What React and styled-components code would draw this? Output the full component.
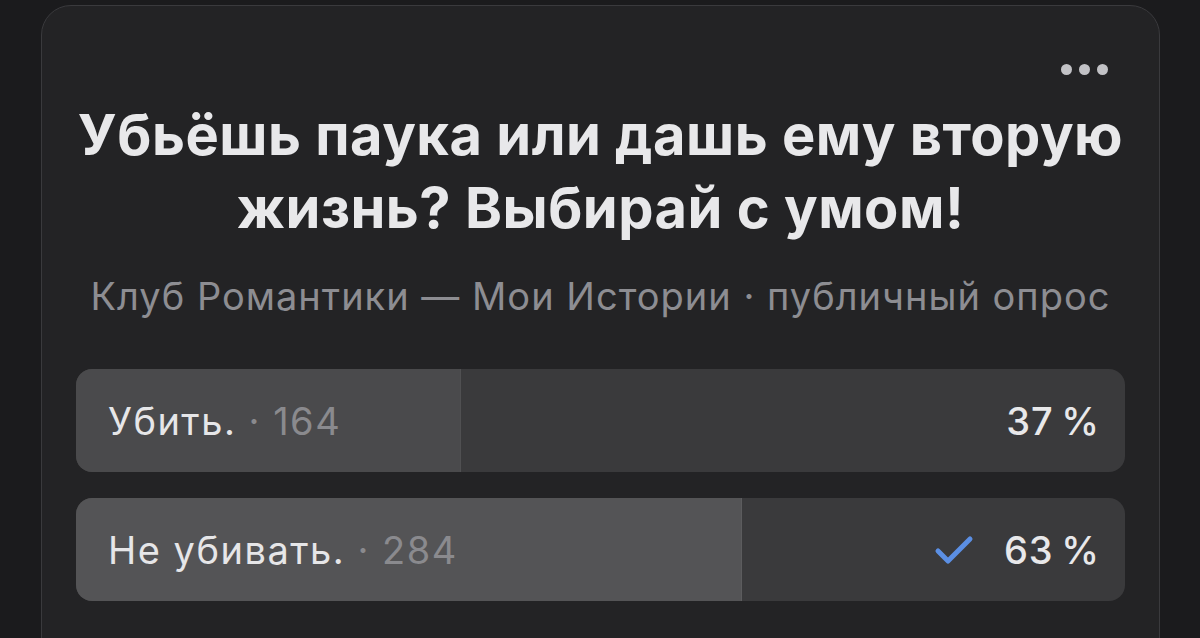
import React from 'react';
import styled, { createGlobalStyle } from 'styled-components';

const GlobalStyle = createGlobalStyle`
    html, body {
        margin: 0;
        padding: 0;
        background: #1b1b1d;
        height: 100%;
        overflow: hidden;
    }
    body {
        font-family: Inter, "Noto Sans", "Liberation Sans", sans-serif;
        -webkit-font-smoothing: antialiased;
    }
`

const options = [
    { label: 'Убить.', votes: 164, percent: 37 },
    { label: 'Не убивать.', votes: 284, percent: 63, chosen: true },
];

const total = options.reduce((sum, o) => sum + o.votes, 0);

function Check() {
    return (
        <svg width="40" height="32" viewBox="0 0 40 32" fill="none">
            <path d="M4 17 L14 27 L36 5" stroke="#5b8fe4" strokeWidth="5"
                strokeLinecap="round" strokeLinejoin="round" />
        </svg>
    )
}

function PollOption({ label, votes, percent, chosen }) {
    return (
        <Option>
            <Fill chosen={chosen} style={{ width: `${votes / total * 100}%` }} />
            <OptionText>
                {label}<Votes> · {votes}</Votes>
            </OptionText>
            <Result>
                {chosen && <Check />}
                <Percent>{percent}&#8201;%</Percent>
            </Result>
        </Option>
    )
}

export default function App() {
    return (
        <>
            <GlobalStyle />
            <Page>
                <Card>
                    <MoreButton>
                        <Dot /><Dot /><Dot />
                    </MoreButton>
                    <Title>Убьёшь паука или дашь ему вторую жизнь? Выбирай с умом!</Title>
                    <Meta>Клуб Романтики — Мои Истории · публичный опрос</Meta>
                    <Options>
                        {options.map(o => <PollOption key={o.label} {...o} />)}
                    </Options>
                </Card>
            </Page>
        </>
    )
}

const Page = styled.div`
    width: 1200px;
    height: 638px;
    padding: 5px 40px 0 41px;
    box-sizing: border-box;
    overflow: hidden;
`

const Card = styled.div`
    position: relative;
    height: 700px;
    box-sizing: border-box;
    background: #232325;
    border: 1px solid #3a3a3d;
    border-radius: 30px;
    padding: 93px 34px 0 34px;
`

const MoreButton = styled.div`
    position: absolute;
    top: 58px;
    right: 51px;
    display: flex;
    gap: 7px;
`

const Dot = styled.span`
    width: 11px;
    height: 11px;
    border-radius: 50%;
    background: #c2c2c6;
`

const Title = styled.h1`
    margin: 0 auto;
    max-width: 1080px;
    text-align: center;
    font-size: 56px;
    line-height: 73px;
    font-weight: 700;
    letter-spacing: 0.5px;
    color: #e8e8ea;
`

const Meta = styled.div`
    margin-top: 29px;
    text-align: center;
    font-size: 38px;
    line-height: 44px;
    letter-spacing: 1px;
    color: #8d8d92;
`

const Options = styled.div`
    margin-top: 51px;
    display: flex;
    flex-direction: column;
    gap: 26px;
`

const Option = styled.div`
    position: relative;
    height: 103px;
    border-radius: 16px;
    background: #3a3a3c;
    overflow: hidden;
    display: flex;
    align-items: center;
    justify-content: space-between;
    padding: 0 25px 0 32px;
`

const Fill = styled.div`
    position: absolute;
    left: 0;
    top: 0;
    bottom: 0;
    background: ${props => props.chosen ? '#545456' : '#4a4a4c'};
    border-right: 1px solid ${props => props.chosen ? '#5c5c5e' : '#505052'};
`

const OptionText = styled.div`
    position: relative;
    font-size: 38px;
    letter-spacing: 1.5px;
    color: #e6e6e8;
`

const Votes = styled.span`
    color: #8a8a8e;
`

const Result = styled.div`
    position: relative;
    display: flex;
    align-items: center;
    gap: 30px;
`

const Percent = styled.div`
    font-size: 38px;
    font-weight: 500;
    letter-spacing: 1px;
    color: #e8e8ea;
`
